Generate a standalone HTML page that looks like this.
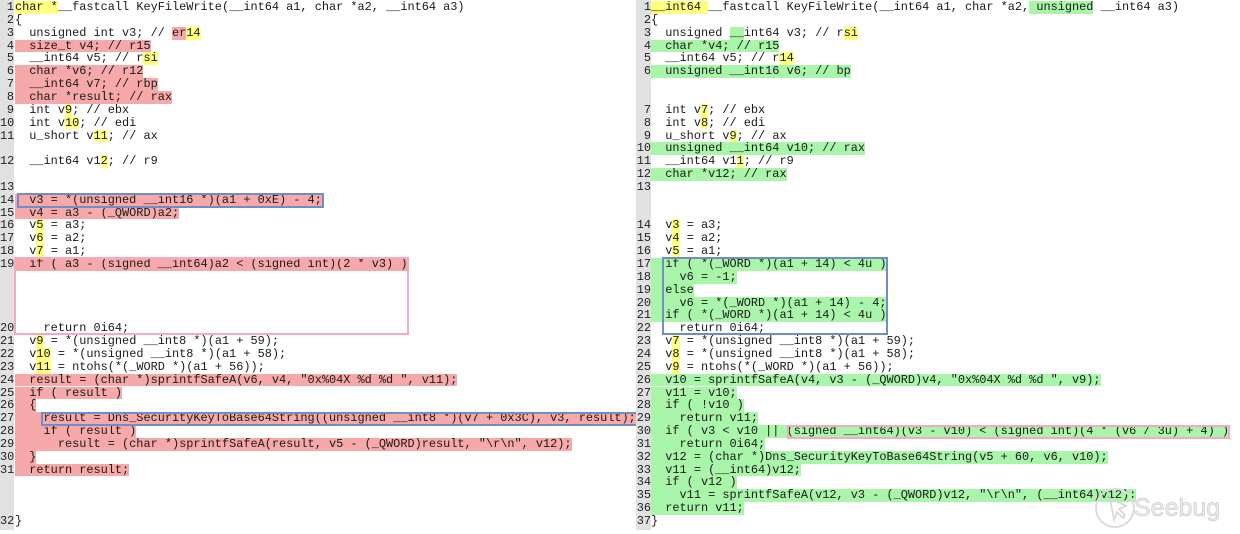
<!DOCTYPE html>
<html><head><meta charset="utf-8">
<style>
html,body{margin:0;padding:0;background:#fff;}
body{width:1240px;height:530px;position:relative;overflow:hidden;font-family:"Liberation Mono","Courier New",monospace;font-size:11.9px;color:#1a1a1a;}
.p{position:absolute;top:0;height:530px;overflow:hidden;}
#L{left:0;width:636px;}
#R{left:636px;width:604px;}
.gut{position:absolute;top:0;left:0;height:530px;background:#e1e1e1;}
#L .gut{width:14px;}
#R .gut{width:15px;}
.n{position:absolute;width:14px;text-align:right;height:12.85px;line-height:12.85px;color:#222;}
#R .n{width:15px;}
.c{position:absolute;height:12.85px;line-height:12.85px;white-space:pre;}
#L .c{left:15px;}
#R .c{left:15px;}
i,b,u,s{font-style:normal;font-weight:normal;text-decoration:none;display:inline-block;height:12.85px;vertical-align:top;}
i{background:#ffff80;}
b{background:#f7a9a9;}
u{background:#a9f5a9;}
.box{position:absolute;box-sizing:border-box;}
.bl{border:2px solid #6f8ec6;}
.pk{border:2px solid #f7a8c4;}
#wm{position:absolute;left:1092px;top:484px;width:148px;height:46px;}
</style></head><body>
<div class="p" id="L">
<div class="gut"></div>
<div class="n" style="top:1px">1</div><div class="c" style="top:1px"><i>char *</i>__fastcall KeyFileWrite(__int64 a1, char *a2, __int64 a3)</div>
<div class="n" style="top:13.85px">2</div><div class="c" style="top:13.85px">{</div>
<div class="n" style="top:26.7px">3</div><div class="c" style="top:26.7px">  unsigned int v3; // <b>er</b><i>14</i></div>
<div class="n" style="top:39.55px">4</div><div class="c" style="top:39.55px"><b>  size_t v4; // r15</b></div>
<div class="n" style="top:52.4px">5</div><div class="c" style="top:52.4px">  __int64 v5; // r<i>si</i></div>
<div class="n" style="top:65.25px">6</div><div class="c" style="top:65.25px"><b>  char *v6; // r12</b></div>
<div class="n" style="top:78.1px">7</div><div class="c" style="top:78.1px"><b>  __int64 v7; // rbp</b></div>
<div class="n" style="top:90.95px">8</div><div class="c" style="top:90.95px"><b>  char *result; // rax</b></div>
<div class="n" style="top:103.8px">9</div><div class="c" style="top:103.8px">  int v<i>9</i>; // ebx</div>
<div class="n" style="top:116.65px">10</div><div class="c" style="top:116.65px">  int v<i>10</i>; // edi</div>
<div class="n" style="top:129.5px">11</div><div class="c" style="top:129.5px">  u_short v<i>11</i>; // ax</div>
<div class="n" style="top:155.2px">12</div><div class="c" style="top:155.2px">  __int64 v1<i>2</i>; // r9</div>
<div class="n" style="top:180.9px">13</div>
<div class="n" style="top:193.75px">14</div><div class="c" style="top:193.75px"><b>  v3 = *(unsigned __int16 *)(a1 + 0xE) - 4;</b></div>
<div class="n" style="top:206.6px">15</div><div class="c" style="top:206.6px"><b>  v4 = a3 - (_QWORD)a2;</b></div>
<div class="n" style="top:219.45px">16</div><div class="c" style="top:219.45px">  v<i>5</i> = a3;</div>
<div class="n" style="top:232.3px">17</div><div class="c" style="top:232.3px">  v<i>6</i> = a2;</div>
<div class="n" style="top:245.15px">18</div><div class="c" style="top:245.15px">  v<i>7</i> = a1;</div>
<div class="n" style="top:258px">19</div><div class="c" style="top:258px"><b>  if ( a3 - (signed __int64)a2 &lt; (signed int)(2 * v3) )</b></div>
<div class="n" style="top:322.25px">20</div><div class="c" style="top:322.25px">    return 0i64;</div>
<div class="n" style="top:335.1px">21</div><div class="c" style="top:335.1px">  v<i>9</i> = *(unsigned __int8 *)(a1 + 59);</div>
<div class="n" style="top:347.95px">22</div><div class="c" style="top:347.95px">  v<i>10</i> = *(unsigned __int8 *)(a1 + 58);</div>
<div class="n" style="top:360.8px">23</div><div class="c" style="top:360.8px">  v<i>11</i> = ntohs(*(_WORD *)(a1 + 56));</div>
<div class="n" style="top:373.65px">24</div><div class="c" style="top:373.65px"><b>  result = (char *)sprintfSafeA(v6, v4, "0x%04X %d %d ", v11);</b></div>
<div class="n" style="top:386.5px">25</div><div class="c" style="top:386.5px"><b>  if ( result )</b></div>
<div class="n" style="top:399.35px">26</div><div class="c" style="top:399.35px"><b>  {</b></div>
<div class="n" style="top:412.2px">27</div><div class="c" style="top:412.2px"><b>    result = Dns_SecurityKeyToBase64String((unsigned __int8 *)(v7 + 0x3C), v3, result);</b></div>
<div class="n" style="top:425.05px">28</div><div class="c" style="top:425.05px"><b>    if ( result )</b></div>
<div class="n" style="top:437.9px">29</div><div class="c" style="top:437.9px"><b>      result = (char *)sprintfSafeA(result, v5 - (_QWORD)result, "\r\n", v12);</b></div>
<div class="n" style="top:450.75px">30</div><div class="c" style="top:450.75px"><b>  }</b></div>
<div class="n" style="top:463.6px">31</div><div class="c" style="top:463.6px"><b>  return result;</b></div>
<div class="n" style="top:515px">32</div><div class="c" style="top:515px">}</div>
<div class="box bl" style="left:17px;top:193px;width:307px;height:14.5px"></div>
<div class="box pk" style="left:14px;top:257px;width:395px;height:78px"></div>
<div class="box bl" style="left:41px;top:411.5px;width:600px;height:14.5px"></div>
</div>
<div class="p" id="R">
<div class="gut"></div>
<div class="n" style="top:1px">1</div><div class="c" style="top:1px"><i>__int64 </i>__fastcall KeyFileWrite(__int64 a1, char *a2,<u> unsigned</u> __int64 a3)</div>
<div class="n" style="top:13.85px">2</div><div class="c" style="top:13.85px">{</div>
<div class="n" style="top:26.7px">3</div><div class="c" style="top:26.7px">  unsigned <u>__</u>int64 v3; // r<i>si</i></div>
<div class="n" style="top:39.55px">4</div><div class="c" style="top:39.55px"><u>  char *v4; // r15</u></div>
<div class="n" style="top:52.4px">5</div><div class="c" style="top:52.4px">  __int64 v5; // r<i>14</i></div>
<div class="n" style="top:65.25px">6</div><div class="c" style="top:65.25px"><u>  unsigned __int16 v6; // bp</u></div>
<div class="n" style="top:103.8px">7</div><div class="c" style="top:103.8px">  int v<i>7</i>; // ebx</div>
<div class="n" style="top:116.65px">8</div><div class="c" style="top:116.65px">  int v<i>8</i>; // edi</div>
<div class="n" style="top:129.5px">9</div><div class="c" style="top:129.5px">  u_short v<i>9</i>; // ax</div>
<div class="n" style="top:142.35px">10</div><div class="c" style="top:142.35px"><u>  unsigned __int64 v10; // rax</u></div>
<div class="n" style="top:155.2px">11</div><div class="c" style="top:155.2px">  __int64 v1<i>1</i>; // r9</div>
<div class="n" style="top:168.05px">12</div><div class="c" style="top:168.05px"><u>  char *v12; // rax</u></div>
<div class="n" style="top:180.9px">13</div>
<div class="n" style="top:219.45px">14</div><div class="c" style="top:219.45px">  v<i>3</i> = a3;</div>
<div class="n" style="top:232.3px">15</div><div class="c" style="top:232.3px">  v<i>4</i> = a2;</div>
<div class="n" style="top:245.15px">16</div><div class="c" style="top:245.15px">  v<i>5</i> = a1;</div>
<div class="n" style="top:258px">17</div><div class="c" style="top:258px"><u>  if ( *(_WORD *)(a1 + 14) &lt; 4u )</u></div>
<div class="n" style="top:270.85px">18</div><div class="c" style="top:270.85px"><u>    v6 = -1;</u></div>
<div class="n" style="top:283.7px">19</div><div class="c" style="top:283.7px"><u>  else</u></div>
<div class="n" style="top:296.55px">20</div><div class="c" style="top:296.55px"><u>    v6 = *(_WORD *)(a1 + 14) - 4;</u></div>
<div class="n" style="top:309.4px">21</div><div class="c" style="top:309.4px"><u>  if ( *(_WORD *)(a1 + 14) &lt; 4u )</u></div>
<div class="n" style="top:322.25px">22</div><div class="c" style="top:322.25px">    return 0i64;</div>
<div class="n" style="top:335.1px">23</div><div class="c" style="top:335.1px">  v<i>7</i> = *(unsigned __int8 *)(a1 + 59);</div>
<div class="n" style="top:347.95px">24</div><div class="c" style="top:347.95px">  v<i>8</i> = *(unsigned __int8 *)(a1 + 58);</div>
<div class="n" style="top:360.8px">25</div><div class="c" style="top:360.8px">  v<i>9</i> = ntohs(*(_WORD *)(a1 + 56));</div>
<div class="n" style="top:373.65px">26</div><div class="c" style="top:373.65px"><u>  v10 = sprintfSafeA(v4, v3 - (_QWORD)v4, "0x%04X %d %d ", v9);</u></div>
<div class="n" style="top:386.5px">27</div><div class="c" style="top:386.5px"><u>  v11 = v10;</u></div>
<div class="n" style="top:399.35px">28</div><div class="c" style="top:399.35px"><u>  if ( !v10 )</u></div>
<div class="n" style="top:412.2px">29</div><div class="c" style="top:412.2px"><u>    return v11;</u></div>
<div class="n" style="top:425.05px">30</div><div class="c" style="top:425.05px"><u>  if ( v3 &lt; v10 || (signed __int64)(v3 - v10) &lt; (signed int)(4 * (v6 / 3u) + 4) )</u></div>
<div class="n" style="top:437.9px">31</div><div class="c" style="top:437.9px"><u>    return 0i64;</u></div>
<div class="n" style="top:450.75px">32</div><div class="c" style="top:450.75px"><u>  v12 = (char *)Dns_SecurityKeyToBase64String(v5 + 60, v6, v10);</u></div>
<div class="n" style="top:463.6px">33</div><div class="c" style="top:463.6px"><u>  v11 = (__int64)v12;</u></div>
<div class="n" style="top:476.45px">34</div><div class="c" style="top:476.45px"><u>  if ( v12 )</u></div>
<div class="n" style="top:489.3px">35</div><div class="c" style="top:489.3px"><u>    v11 = sprintfSafeA(v12, v3 - (_QWORD)v12, "\r\n", (__int64)v12);</u></div>
<div class="n" style="top:502.15px">36</div><div class="c" style="top:502.15px"><u>  return v11;</u></div>
<div class="n" style="top:515px">37</div><div class="c" style="top:515px">}</div>
<div class="box bl" style="left:26px;top:257px;width:226px;height:78px"></div>
<div class="box pk" style="left:151px;top:424.5px;width:443px;height:14.5px"></div>
</div>
<div id="wm">
<svg width="148" height="46" viewBox="0 0 148 46">
<circle cx="23" cy="24" r="19" fill="none" stroke="#dcdcdc" stroke-width="2"/>
<path d="M18 14 L22 36 L25 28 L31 34 L33 31 L27 25 L34 22 Z" fill="none" stroke="#d6d6d6" stroke-width="1.6"/>
<text x="42" y="32" font-family="Liberation Sans, sans-serif" font-size="25" fill="#ececec" stroke="#cdcdcd" stroke-width="0.7">Seebug</text>
</svg>
</div>
</body></html>
